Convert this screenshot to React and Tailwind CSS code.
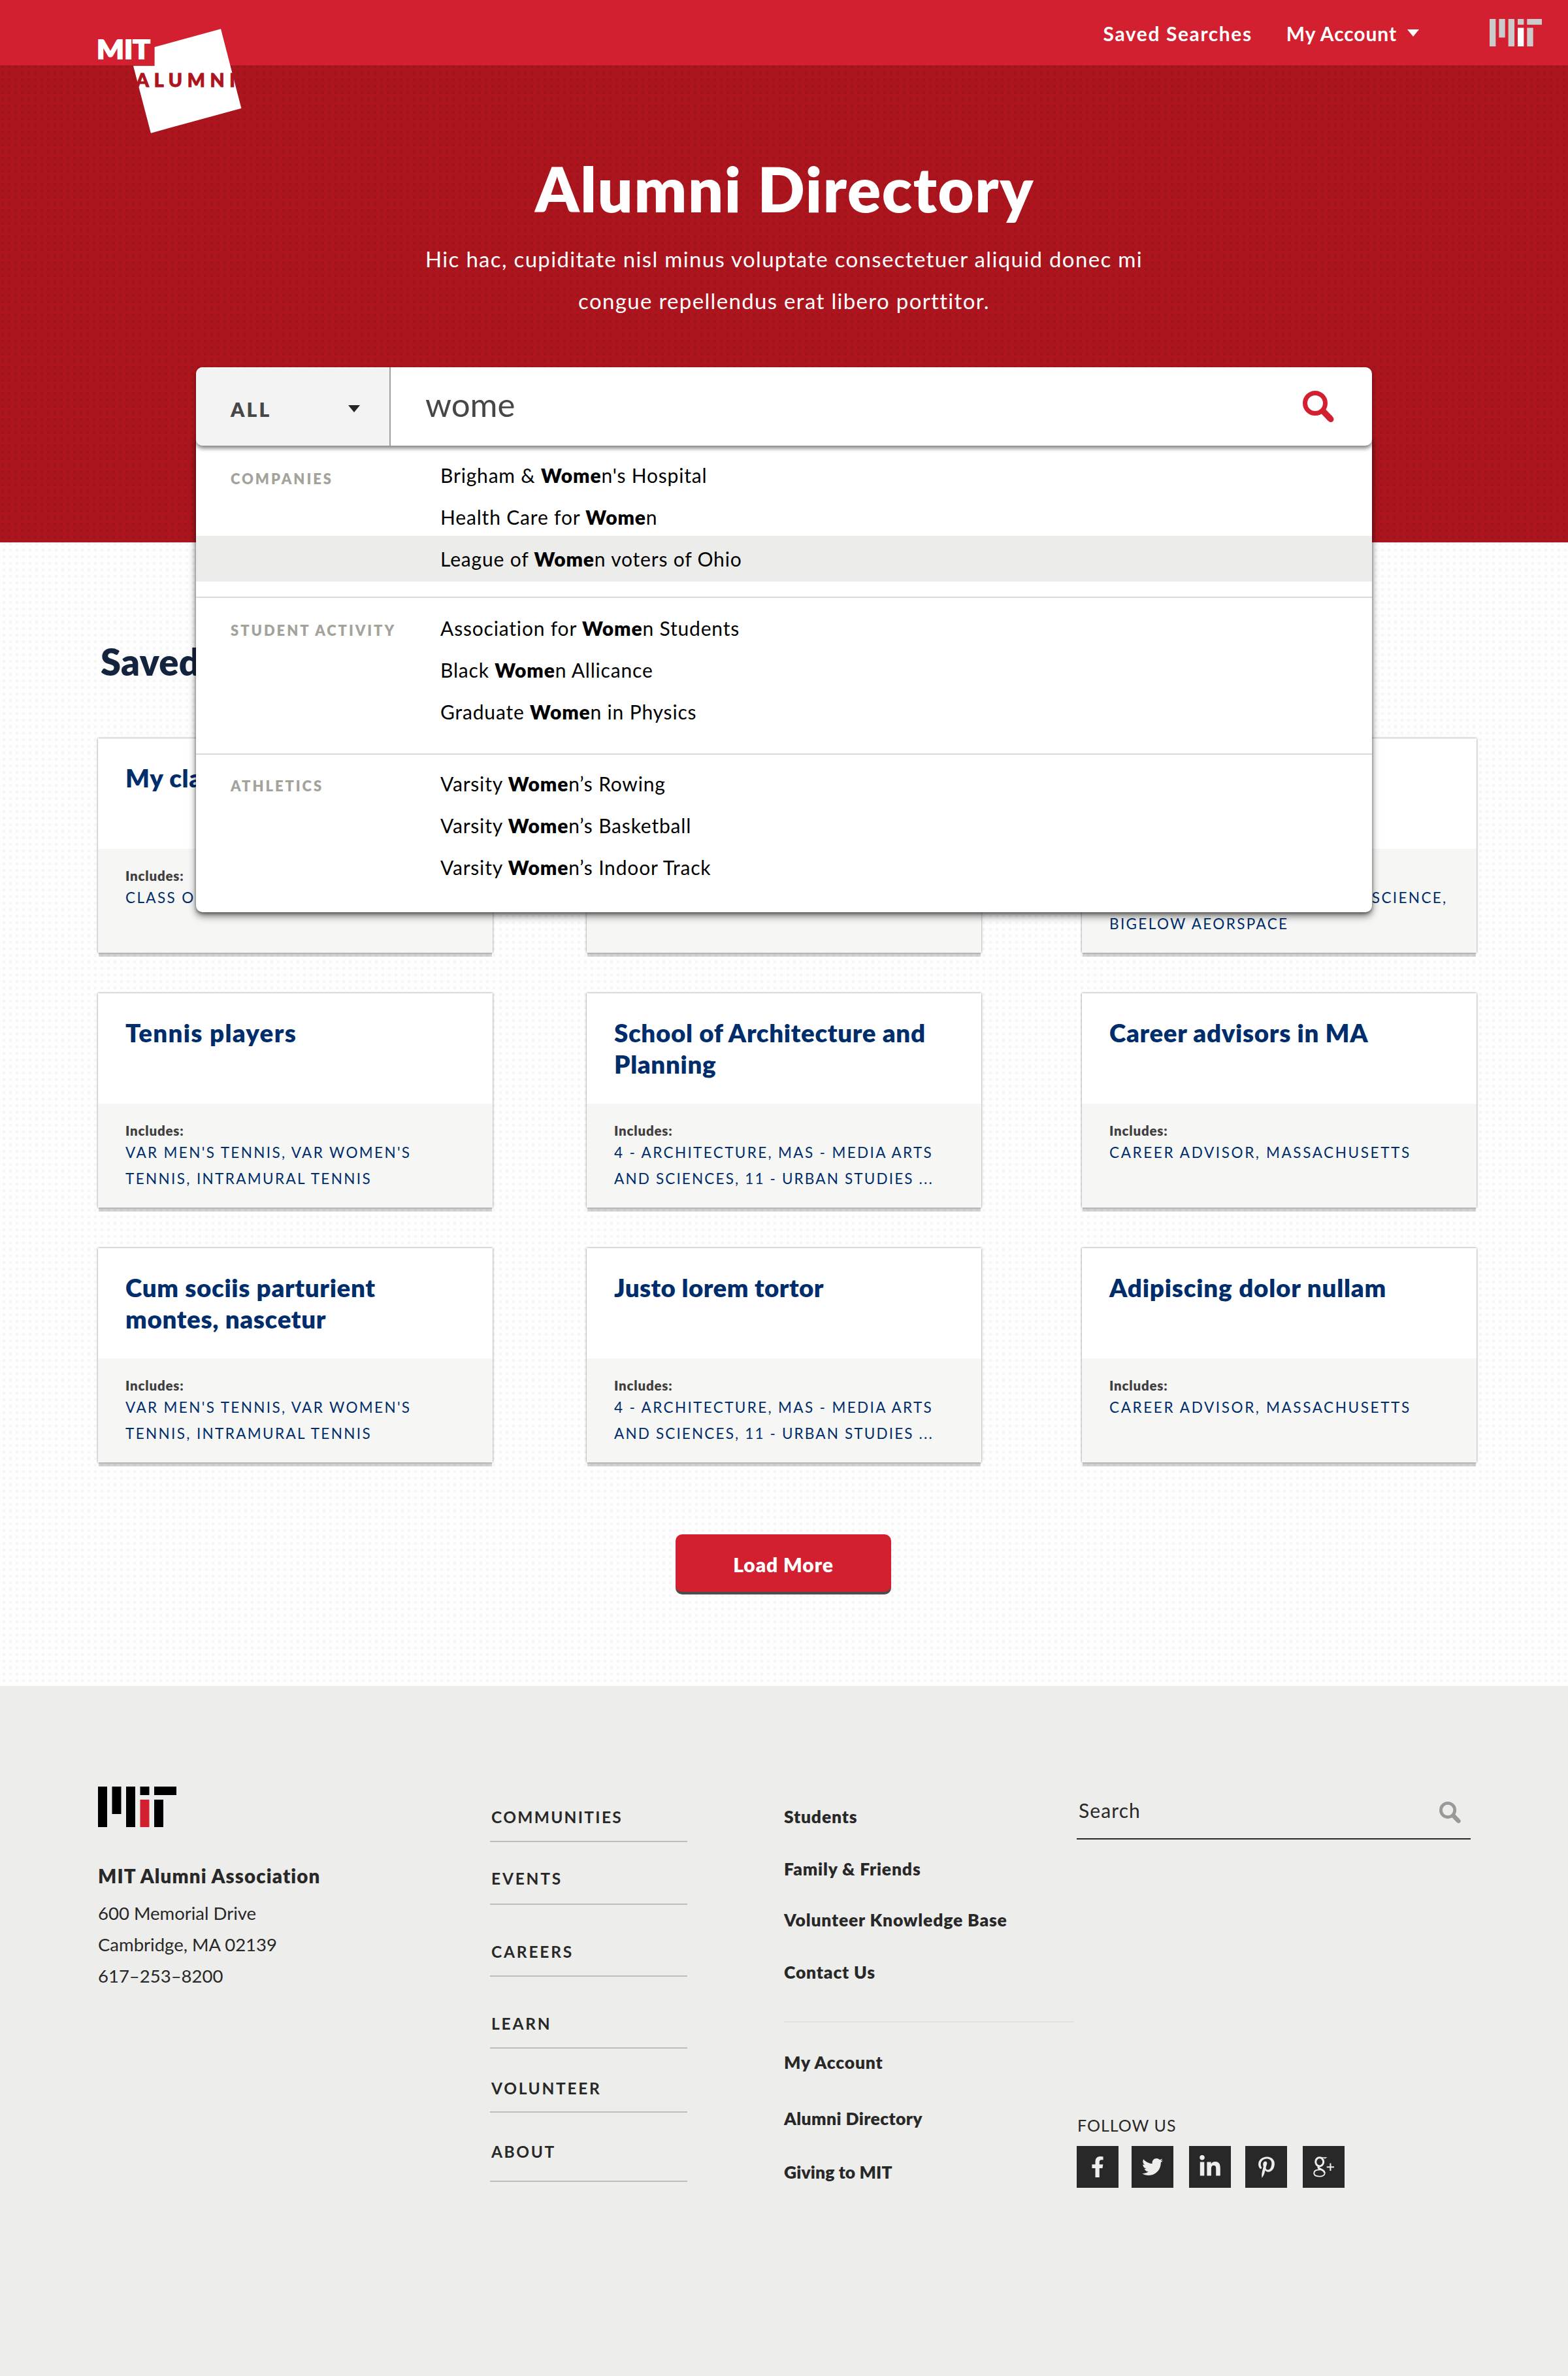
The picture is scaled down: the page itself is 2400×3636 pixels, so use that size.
import React from "react";
import { FaFacebookF, FaTwitter, FaLinkedinIn, FaPinterestP } from "react-icons/fa";

function MitMark({ bar, accent, className }) {
  return (
    <svg viewBox="0 0 120 62" className={className} preserveAspectRatio="none">
      <g fill={bar}>
        <rect x="0" y="0" width="14" height="62" />
        <rect x="21.5" y="0" width="14" height="42" />
        <rect x="43" y="0" width="14" height="62" />
        <rect x="64.5" y="0" width="14" height="13" />
        <rect x="86" y="0" width="34" height="13" />
        <rect x="86" y="20" width="14" height="42" />
      </g>
      <rect x="64.5" y="20" width="14" height="42" fill={accent} />
    </svg>
  );
}

function SearchIcon({ className }) {
  return (
    <svg viewBox="0 0 48 48" fill="none" stroke="currentColor" className={className}>
      <circle cx="19" cy="19" r="15.5" strokeWidth="7" />
      <path d="M30 30 L42 42.5" strokeWidth="9.5" />
      <path d="M41 41.5 L43 43.5" strokeWidth="9" strokeLinecap="round" />
    </svg>
  );
}

function Caret({ className }) {
  return (
    <svg viewBox="0 0 18 11" fill="currentColor" className={className} preserveAspectRatio="none">
      <path d="M0 0h18L9 11z" />
    </svg>
  );
}

function AlumniLogo() {
  return (
    <svg viewBox="0 0 224 164" className="h-[164px] w-[224px] overflow-visible">
      <path fill="#fff" d="M86.6 32 188 4.3 219.4 125.7 80.9 163.7 54 60.7H86.6z" />
      <text x="-2" y="49.5" fill="#fff" stroke="#fff" strokeWidth="1.8" fontFamily="Lato" fontWeight="900" fontSize="40" textLength="82" lengthAdjust="spacingAndGlyphs">MIT</text>
      <text x="58" y="92.5" fill="#ad151e" stroke="#ad151e" strokeWidth="1" fontFamily="Lato" fontWeight="900" fontSize="28.5" textLength="152" lengthAdjust="spacing">ALUMNI</text>
    </svg>
  );
}

function Header() {
  return (
    <header className="flex h-[100px] justify-between bg-[#d22030] pr-[40px] pl-[150px]">
      <div className="relative z-10 h-[100px] pt-[40px]">
        <AlumniLogo />
      </div>
      <nav className="flex items-center text-[30px] font-bold text-white">
        <a className="pt-[2px] tracking-[1.6px]">Saved Searches</a>
        <a className="ml-[52px] pt-[2px] tracking-[0.9px]">My Account</a>
        <Caret className="ml-[16px] h-[11px] w-[18px]" />
        <MitMark bar="#cccbcb" accent="#ffffff" className="ml-[108px] h-[42px] w-[80px]" />
      </nav>
    </header>
  );
}

const groups = [
  { label: "COMPANIES", labelPad: "pt-[9px]", pad: "pt-[10px] pb-[23px] border-b-2", rows: [["Brigham & ", "n's Hospital"], ["Health Care for ", "n"], ["League of ", "n voters of Ohio", true]] },
  { label: "STUDENT ACTIVITY", labelPad: "pt-[7px]", pad: "pt-[11px] pb-[35px] border-b-2", rows: [["Association for ", "n Students"], ["Black ", "n Allicance"], ["Graduate ", "n in Physics"]] },
  { label: "ATHLETICS", labelPad: "pt-[7px]", pad: "pt-[9px] pb-[40px]", rows: [["Varsity ", "n’s Rowing"], ["Varsity ", "n’s Basketball"], ["Varsity ", "n’s Indoor Track"]] },
];

function Suggestions() {
  return (
    <div className="absolute top-[110px] left-0 w-[1800px] rounded-b-[10px] bg-white pt-[10px] shadow-[0_6px_12px_rgba(0,0,0,0.5),0_2px_4px_rgba(0,0,0,0.4)]">
      {groups.map((g) => (
        <div key={g.label} className={"border-[#dadada] " + g.pad}>
          {g.rows.map(([pre, post, active], i) => (
            <div key={post} className={"flex pl-[53px] " + (active ? "h-[70px] bg-[#ececea]" : "h-[64px]")}>
              <div className={"w-[321px] text-[22px] leading-[64px] font-extrabold tracking-[2.95px] text-[#a4a39b] " + g.labelPad}>
                {i === 0 && <span>{g.label}</span>}
              </div>
              <div className="pt-[3px] text-[30px] leading-[64px] tracking-[0.82px] whitespace-pre text-black">
                {pre}<b className="font-extrabold">Wome</b>{post}
              </div>
            </div>
          ))}
        </div>
      ))}
    </div>
  );
}

function Hero() {
  return (
    <section className="relative z-[5] flex h-[730px] flex-col items-center bg-[conic-gradient(from_270deg_at_4px_4px,#a0151d_90deg,#ad151e_0)] bg-[length:10px_10px] bg-[position:2px_0px] pt-[132px] text-white">
      <h1 className="pl-[2px] text-[95px] leading-[112px] font-extrabold tracking-[1.7px]">Alumni Directory</h1>
      <p className="mt-[20px] text-center text-[33px] leading-[64px] tracking-[1.33px]">
        Hic hac, cupiditate nisl minus voluptate consectetuer aliquid donec mi<br />
        congue repellendus erat libero porttitor.
      </p>
      <div className="relative mt-[70px] h-[120px] w-[1800px]">
        <Suggestions />
        <div className="relative flex h-[120px] rounded-[10px] bg-white shadow-[0_4px_6px_rgba(0,0,0,0.5)]">
          <div className="flex w-[298px] items-center justify-between rounded-l-[10px] border-r-2 border-[#a09f9a] bg-[#f3f3f3] pr-[45px] pl-[53px] text-[#474747]">
            <span className="pt-[8px] text-[30px] font-extrabold tracking-[3.2px]">ALL</span>
            <Caret className="mt-[6px] h-[11px] w-[18px] text-[#262626]" />
          </div>
          <div className="flex grow items-center justify-between pr-[58px] pl-[53px] text-[#474747]">
            <span className="pb-[5px] text-[51px]">wome</span>
            <SearchIcon className="h-[48px] w-[48px] text-[#d22030]" />
          </div>
        </div>
      </div>
    </section>
  );
}

const cards = [
  { title: "My classmates", tags: ["CLASS OF 1999"] },
  { title: "Cambridge", tags: ["CAMBRIDGE"] },
  { title: "Aerospace", tags: ["6-14 - ELECTRICAL, COMPUTER SCIENCE,", "BIGELOW AEORSPACE"] },
  { title: "Tennis players", track: "tracking-[1.3px]", tags: ["VAR MEN'S TENNIS, VAR WOMEN'S", "TENNIS, INTRAMURAL TENNIS"] },
  { title: "School of Architecture and Planning", tags: ["4 - ARCHITECTURE, MAS - MEDIA ARTS", "AND SCIENCES, 11 - URBAN STUDIES ..."] },
  { title: "Career advisors in MA", tags: ["CAREER ADVISOR, MASSACHUSETTS"] },
  { title: "Cum sociis parturient montes, nascetur", tags: ["VAR MEN'S TENNIS, VAR WOMEN'S", "TENNIS, INTRAMURAL TENNIS"] },
  { title: "Justo lorem tortor", track: "tracking-[0.4px]", tags: ["4 - ARCHITECTURE, MAS - MEDIA ARTS", "AND SCIENCES, 11 - URBAN STUDIES ..."] },
  { title: "Adipiscing dolor nullam", track: "tracking-[0.8px]", tags: ["CAREER ADVISOR, MASSACHUSETTS"] },
];

const tagTracking = {
  "AND SCIENCES, 11 - URBAN STUDIES ...": "tracking-[2.15px]",
  "CAREER ADVISOR, MASSACHUSETTS": "tracking-[2.62px]",
};

function Card({ title, tags, track = "tracking-[0.65px]" }) {
  return (
    <article className="h-[328px] w-[604px] bg-[#f6f6f4] shadow-[0_0_3px_rgba(0,0,0,0.5),0_7px_0_-1px_rgba(0,0,0,0.17)]">
      <h3 className={"h-[169px] bg-white pt-[36px] pr-[60px] pl-[42px] text-[38.5px] leading-[48px] font-extrabold text-[#002d6b] " + track}>{title}</h3>
      <div className="px-[42px] pt-[27px]">
        <div className="text-[20.5px] leading-[28px] font-extrabold tracking-[0.8px] text-[#3f3f3f]">Includes:</div>
        {tags.map((t) => (
          <div key={t} className={"text-[22.5px] leading-[40px] whitespace-nowrap text-[#002d6b] " + (tagTracking[t] || "tracking-[2.36px]")}>{t}</div>
        ))}
      </div>
    </article>
  );
}

function SavedSearches() {
  return (
    <main className="flex h-[1750px] flex-col items-center bg-[conic-gradient(from_270deg_at_4px_4px,#f6f6f6_90deg,#fefefe_0)] bg-[length:10px_10px] bg-[position:4px_0px] pt-[151px]">
      <h2 className="w-[2092px] text-[56px] leading-[64px] font-extrabold tracking-[0.4px] text-[#15243e]">Saved Searches</h2>
      <div className="mt-[85px] ml-[10px] grid w-[2110px] grid-cols-[748px_758px_604px] gap-y-[62px]">
        {cards.map((c) => <Card key={c.title} {...c} />)}
      </div>
      <button className="mt-[110px] mr-[2px] h-[88px] w-[330px] rounded-[10px] bg-[#d22030] pt-[4px] text-[30px] font-extrabold tracking-[0.9px] text-white shadow-[0_4px_0_#4d4d4d]">Load More</button>
    </main>
  );
}

const sections = [
  ["COMMUNITIES", "pb-[20px] tracking-[2.3px]"],
  ["EVENTS", "pt-[40px] pb-[22px] tracking-[2.8px]"],
  ["CAREERS", "pt-[56px] pb-[20px] tracking-[2.8px]"],
  ["LEARN", "pt-[56px] pb-[20px] tracking-[2.8px]"],
  ["VOLUNTEER", "pt-[45px] pb-[19px] tracking-[2.7px]"],
  ["ABOUT", "pt-[44px] pb-[28px] tracking-[2.6px]"],
];

function GooglePlus() {
  return (
    <svg viewBox="0 0 32 32" className="h-[32px] w-[32px]" fill="none" stroke="currentColor">
      <ellipse cx="9.7" cy="8.3" rx="6" ry="6.6" strokeWidth="3" />
      <path d="M10 1.9H19.3L17.3 3.2" strokeWidth="1.4" />
      <path d="M8.5 15C6.5 17 7.5 18.6 10 19.7C14 21.3 17.7 22 17.7 25.5C17.7 28.5 14.5 30.6 9.5 30.6C4.5 30.6 1.2 28.9 1.2 25.6C1.2 21.8 5.5 20.3 10.5 20.3" strokeWidth="1.9" />
      <path d="M8 15.5C7.500 18 11 19 13 20.2C16 21.8 17.2 23 17.2 25" strokeWidth="2.6" />
      <path d="M26.4 10.5V22M20.7 16.2H32" strokeWidth="2.1" />
    </svg>
  );
}

function Social({ children, className = "" }) {
  return <a className={"flex h-[64px] w-[64px] items-center justify-center bg-[#282828] text-[#ededeb] " + className}>{children}</a>;
}

function Footer() {
  return (
    <footer className="grid h-[1056px] grid-cols-[600px_450px_448px_603px] bg-[#ededeb] pl-[150px] text-[#282828]">
      <div className="pt-[154px]">
        <MitMark bar="#000000" accent="#d22030" className="h-[62px] w-[120px]" />
        <div className="mt-[51px] text-[29.5px] leading-[48px] font-extrabold tracking-[1.1px]">MIT Alumni Association</div>
        <div className="mt-[9px] text-[27.5px] leading-[48px]">
          <div>600 Memorial Drive</div>
          <div>Cambridge, MA 02139</div>
          <div>617–253–8200</div>
        </div>
      </div>
      <div className="w-[302px] pt-[185px]">
        {sections.map(([t, pad]) => (
          <div key={t} className={"border-b-2 border-[#bdbdbb] pl-[2px] text-[24.5px] leading-[32px] font-bold " + pad}>{t}</div>
        ))}
      </div>
      <div className="pt-[184px] text-[26.5px] leading-[32px] font-extrabold tracking-[0.82px]">
        <div>Students</div>
        <div className="mt-[48px]">Family &amp; Friends</div>
        <div className="mt-[46px]">Volunteer Knowledge Base</div>
        <div className="mt-[48px]">Contact Us</div>
        <div className="mt-[59px] w-[444px] border-t-2 border-[#e1e1df] pt-[45px]">My Account</div>
        <div className="mt-[54px] tracking-[0.4px]">Alumni Directory</div>
        <div className="mt-[50px] tracking-[0.1px]">Giving to MIT</div>
      </div>
      <div className="pt-[170px]">
        <div className="flex items-center justify-between border-b-2 border-[#282828] pr-[15px] pb-[23px] pl-[3px]">
          <span className="text-[30px] leading-[40px] tracking-[1.1px]">Search</span>
          <SearchIcon className="mt-[3px] -mb-[3px] h-[33px] w-[33px] text-[#999]" />
        </div>
        <div className="mt-[421px] pl-[1px] text-[25px] leading-[32px] tracking-[1px]">FOLLOW US</div>
        <div className="mt-[16px] flex">
          <Social><FaFacebookF size={32} /></Social>
          <Social className="ml-[20px]"><FaTwitter size={32} /></Social>
          <Social className="ml-[24px]"><FaLinkedinIn size={36} /></Social>
          <Social className="ml-[22px]"><FaPinterestP size={33} /></Social>
          <Social className="ml-[24px]"><GooglePlus /></Social>
        </div>
      </div>
    </footer>
  );
}

export default function App() {
  return (
    <div className="w-[2400px] font-[Lato,sans-serif]">
      <Header />
      <Hero />
      <SavedSearches />
      <Footer />
    </div>
  );
}
